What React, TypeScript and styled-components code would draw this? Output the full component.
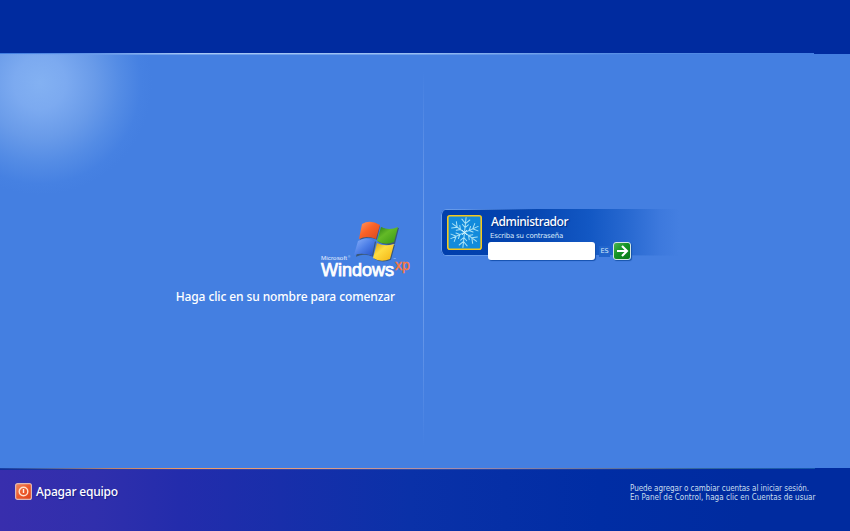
import React from "react";
import styled, { createGlobalStyle } from "styled-components";

const GlobalStyle = createGlobalStyle`
  * { box-sizing: border-box; }
  html, body { margin: 0; width: 850px; height: 531px; overflow: hidden; }
  body { font-family: "Noto Sans", "Open Sans", sans-serif; color: #fff; }
`;

const Screen = styled.div`
  width: 850px;
  height: 531px;
  display: grid;
  grid-template-rows: 53px 415px 63px;
  background: #447fe1;
`;

const TopBar = styled.header`
  background: #002b9f;
`;

const Main = styled.main`
  display: grid;
  grid-template-columns: 423px 1px 1fr;
  background:
    linear-gradient(90deg, #3f7ce1 0, #6598e9 100px, #a7c8f5 190px, #97bdf2 420px, #5a91e6 600px, #447fe1 814px, transparent 814px) 0 0 / 100% 1px no-repeat,
    linear-gradient(90deg, transparent 814px, #002b9f 814px) 0 0 / 100% 1px no-repeat,
    linear-gradient(90deg, transparent, #6f9fea 150px, #6f9fea 420px, transparent 640px) 0 1px / 100% 1px no-repeat,
    radial-gradient(circle at 40px 30px, #83b1f2 0, #7caaf0 26px, #699be9 55px, #548ce5 80px, #4681e2 101px, #447fe1 112px);
`;

const Welcome = styled.section`
  display: flex;
  flex-direction: column;
  align-items: flex-end;
  padding-top: 165px;
`;

const BrandMark = styled.svg`
  width: 96px;
  height: 64px;
  margin-right: 8px;
  overflow: visible;
`;

const Prompt = styled.p`
  margin: 7px 28px 0 0;
  font: 500 12px/16px "Noto Sans", sans-serif;
  letter-spacing: -0.1px;
  white-space: nowrap;
`;

const Divider = styled.div`
  margin: 18px 0 22px;
  background: linear-gradient(transparent, #6294e8 28%, #75a3ec 50%, #6294e8 72%, transparent);
`;

const Accounts = styled.section`
  padding: 156px 0 0 17px;
`;

const Account = styled.form`
  display: flex;
  width: 238px;
  height: 47px;
  padding: 6px 0 0 6px;
  border-radius: 6px 0 0 6px;
  background:
    linear-gradient(90deg, #6b9eea, #5f94e7 10%, transparent 40%) 0 0 / 100% 1px no-repeat,
    linear-gradient(90deg, #6b9eea, #4e88e4 60%, transparent) 0 100% / 100% 1px no-repeat,
    linear-gradient(90deg, #003eac 0, #0444af 35%, #1257c3 62%, #2768d0 78%, #3d79dd 92%, #447fe1 100%);
  box-shadow: inset 1px 0 #6b9eea;
`;

const Avatar = styled.svg`
  flex: none;
  width: 35px;
  height: 35px;
`;

const AccountDetails = styled.div`
  margin-left: 6px;
  display: flex;
  flex-direction: column;
`;

const UserName = styled.h1`
  margin: -1px 0 0 3px;
  font: 500 12px/15px "Noto Sans", sans-serif;
  letter-spacing: -0.42px;
  text-shadow: 1px 1px 1px #002d82;
  white-space: nowrap;
`;

const Hint = styled.label`
  margin: 2px 0 0 2px;
  font: 400 7px/10px "DejaVu Sans", sans-serif;
  color: #d7eafa;
  letter-spacing: -0.2px;
  white-space: nowrap;
`;

const PasswordRow = styled.div`
  display: flex;
  align-items: center;
  margin-top: 1px;
`;

const Password = styled.input`
  width: 107px;
  height: 18px;
  padding: 0 5px;
  border: 0;
  border-radius: 3px;
  background: #fff;
  box-shadow: 1px 1px 1px #1550ad;
  outline: none;
`;

const Locale = styled.span`
  width: 11px;
  height: 11px;
  margin: 1px 3px 0 4px;
  background: #2165cc;
  color: #d7eafa;
  font: 400 6.5px/11px "DejaVu Sans", sans-serif;
  text-align: center;
`;

const Submit = styled.button`
  width: 18px;
  height: 18px;
  padding: 0;
  border: 1px solid #d5e8e4;
  border-radius: 3px;
  background: linear-gradient(135deg, #4db550, #159325 45%, #077817);
  box-shadow: 1px 1px 1px #1854ab;
  svg { display: block; width: 16px; height: 16px; }
`;

const Footer = styled.footer`
  display: flex;
  justify-content: space-between;
  padding: 15px 34px 0 15px;
  background:
    linear-gradient(90deg, #173fa4 0, #4762a3 45px, #bd836e 110px, #f39c62 190px, #df9d84 320px, #a38bad 460px, #63739b 610px, #31669d 700px, #1557ac 815px, transparent 815px) 0 0 / 100% 1px no-repeat,
    linear-gradient(90deg, #102f9a, #303cac 180px, #2849ac 420px, #002b9f 720px) 0 1px / 100% 1px no-repeat,
    linear-gradient(90deg, #382ead 0, #302fac 95px, #232cac 180px, #182eaa 280px, #0a31a8 410px, #002da4 600px, #002b9f 750px);
`;

const Power = styled.button`
  display: flex;
  align-items: flex-start;
  gap: 4px;
  padding: 0;
  border: 0;
  background: none;
  color: #fff;
  font: 500 12px/17px "Noto Sans", sans-serif;
  letter-spacing: -0.2px;
  text-shadow: 1px 1px 1px #19218a;
  white-space: nowrap;
  svg { width: 17px; height: 17px; flex: none; }
`;

const Help = styled.div`
  width: 187px;
  padding: 1px 0 0 1px;
  font: 400 8px/9px "DejaVu Sans", sans-serif;
  font-stretch: condensed;
  color: #c9dfef;
  white-space: nowrap;
`;

const HelpLine = styled.p<{ $tracking: string }>`
  margin: 0;
  letter-spacing: ${({ $tracking }) => $tracking};
`;

function WindowsBrand() {
  return (
    <BrandMark viewBox="0 0 96 64" role="img" aria-label="Microsoft Windows XP">
      <defs>
        <linearGradient id="red" x2="1" y2="1"><stop stopColor="#ff9a62"/><stop offset=".45" stopColor="#fa6226"/><stop offset="1" stopColor="#d64820"/></linearGradient>
        <linearGradient id="green" x2="1" y2="1"><stop stopColor="#267d16"/><stop offset=".4" stopColor="#64ba27"/><stop offset="1" stopColor="#359612"/></linearGradient>
        <linearGradient id="blue" x2="1" y2="1"><stop stopColor="#8bb2fb"/><stop offset=".5" stopColor="#4d7fe7"/><stop offset="1" stopColor="#2450c4"/></linearGradient>
        <linearGradient id="gold" x2="1" y2="1"><stop stopColor="#ce9d10"/><stop offset=".4" stopColor="#ffdc40"/><stop offset="1" stopColor="#f2b212"/></linearGradient>
      </defs>
      <g transform="translate(1 .8)" fill="#3b5875">
        <path d="M44 7Q51 1 60 7L57 21Q48 17 40 21Z"/>
        <path d="M62 9Q70 13 79 9L75 25Q66 28 58 23Z"/>
        <path d="M39 23Q47 18 56 23L53 38Q44 34 36 38Z"/>
        <path d="M58 25Q66 29 75 26L71 41Q62 45 54 40Z"/>
      </g>
      <path fill="url(#red)" d="M43 6Q51 1 61 7L57 21Q48 17 40 21Z"/>
      <path fill="url(#green)" d="M62 9Q70 13 79 9L75 24Q66 28 58 23Z"/>
      <path fill="url(#blue)" d="M39 23Q47 18 56 23L53 38Q44 34 35 37Z"/>
      <path fill="url(#gold)" d="M58 25Q66 29 75 26L71 41Q62 45 54 40Z"/>
      <g fontFamily="Liberation Sans, sans-serif">
        <text x="2" y="42.3" fill="#e8f1ff" fontSize="6.2" textLength="26">Microsoft</text>
        <text x="29" y="40" fill="#d7e8ff" fontSize="3">®</text>
        <text x="2" y="57.7" fill="white" stroke="white" strokeWidth=".75" fontSize="17.5" textLength="73" lengthAdjust="spacingAndGlyphs">Windows</text>
        <text x="76" y="51.5" fill="#f87945" stroke="#f87945" strokeWidth=".45" fontSize="14" textLength="15" lengthAdjust="spacingAndGlyphs">xp</text>
        <text x="74" y="42" fill="#c7dcff" fontSize="3">™</text>
      </g>
    </BrandMark>
  );
}

function SnowflakeAvatar() {
  return (
    <Avatar viewBox="0 0 35 35" aria-hidden="true">
      <rect x=".8" y=".8" width="33.4" height="33.4" rx="2" fill="#128bdc" stroke="#f5c91d" strokeWidth="1.6"/>
      <g transform="translate(17.5 17.5) rotate(6)" fill="none" stroke="#a9e2f6" strokeWidth="1" strokeLinecap="round">
        {[0, 60, 120, 180, 240, 300].map((angle) => (
          <path key={angle} transform={`rotate(${angle})`} d="M0 0V-15M0-5L-3-8M0-5L3-8M0-9L-4-13M0-9L4-13"/>
        ))}
      </g>
      <path d="M15 15L20 20M20 15L15 20" stroke="#e5faff" strokeWidth=".8"/>
    </Avatar>
  );
}

export default function App() {
  return (
    <>
      <GlobalStyle />
      <Screen>
        <TopBar />
        <Main>
          <Welcome>
            <WindowsBrand />
            <Prompt>Haga clic en su nombre para comenzar</Prompt>
          </Welcome>
          <Divider />
          <Accounts>
            <Account onSubmit={(event) => event.preventDefault()}>
              <SnowflakeAvatar />
              <AccountDetails>
                <UserName>Administrador</UserName>
                <Hint htmlFor="password">Escriba su contraseña</Hint>
                <PasswordRow>
                  <Password id="password" type="password" />
                  <Locale>ES</Locale>
                  <Submit aria-label="Iniciar sesión">
                    <svg viewBox="0 0 16 16"><path d="M3 8H13M8 3L13 8L8 13" fill="none" stroke="#fff" strokeWidth="2.1"/></svg>
                  </Submit>
                </PasswordRow>
              </AccountDetails>
            </Account>
          </Accounts>
        </Main>
        <Footer>
          <Power>
            <svg viewBox="0 0 17 17">
              <defs><linearGradient id="power" x2="1" y2="1"><stop stopColor="#f08a60"/><stop offset=".5" stopColor="#ed5a2c"/><stop offset="1" stopColor="#dc411b"/></linearGradient></defs>
              <rect x=".6" y=".6" width="15.8" height="15.8" rx="2" fill="url(#power)" stroke="#dfb7b3" strokeWidth="1.2"/>
              <circle cx="8.5" cy="8.5" r="4.3" fill="none" stroke="#ffe2ce" strokeWidth="1.4"/>
              <path d="M8.5 6V10" stroke="#fff2e6" strokeWidth="1.4"/>
            </svg>
            Apagar equipo
          </Power>
          <Help>
            <HelpLine $tracking="-0.06px">Puede agregar o cambiar cuentas al iniciar sesión.</HelpLine>
            <HelpLine $tracking="0.03px">En Panel de Control, haga clic en Cuentas de usuar</HelpLine>
          </Help>
        </Footer>
      </Screen>
    </>
  );
}
